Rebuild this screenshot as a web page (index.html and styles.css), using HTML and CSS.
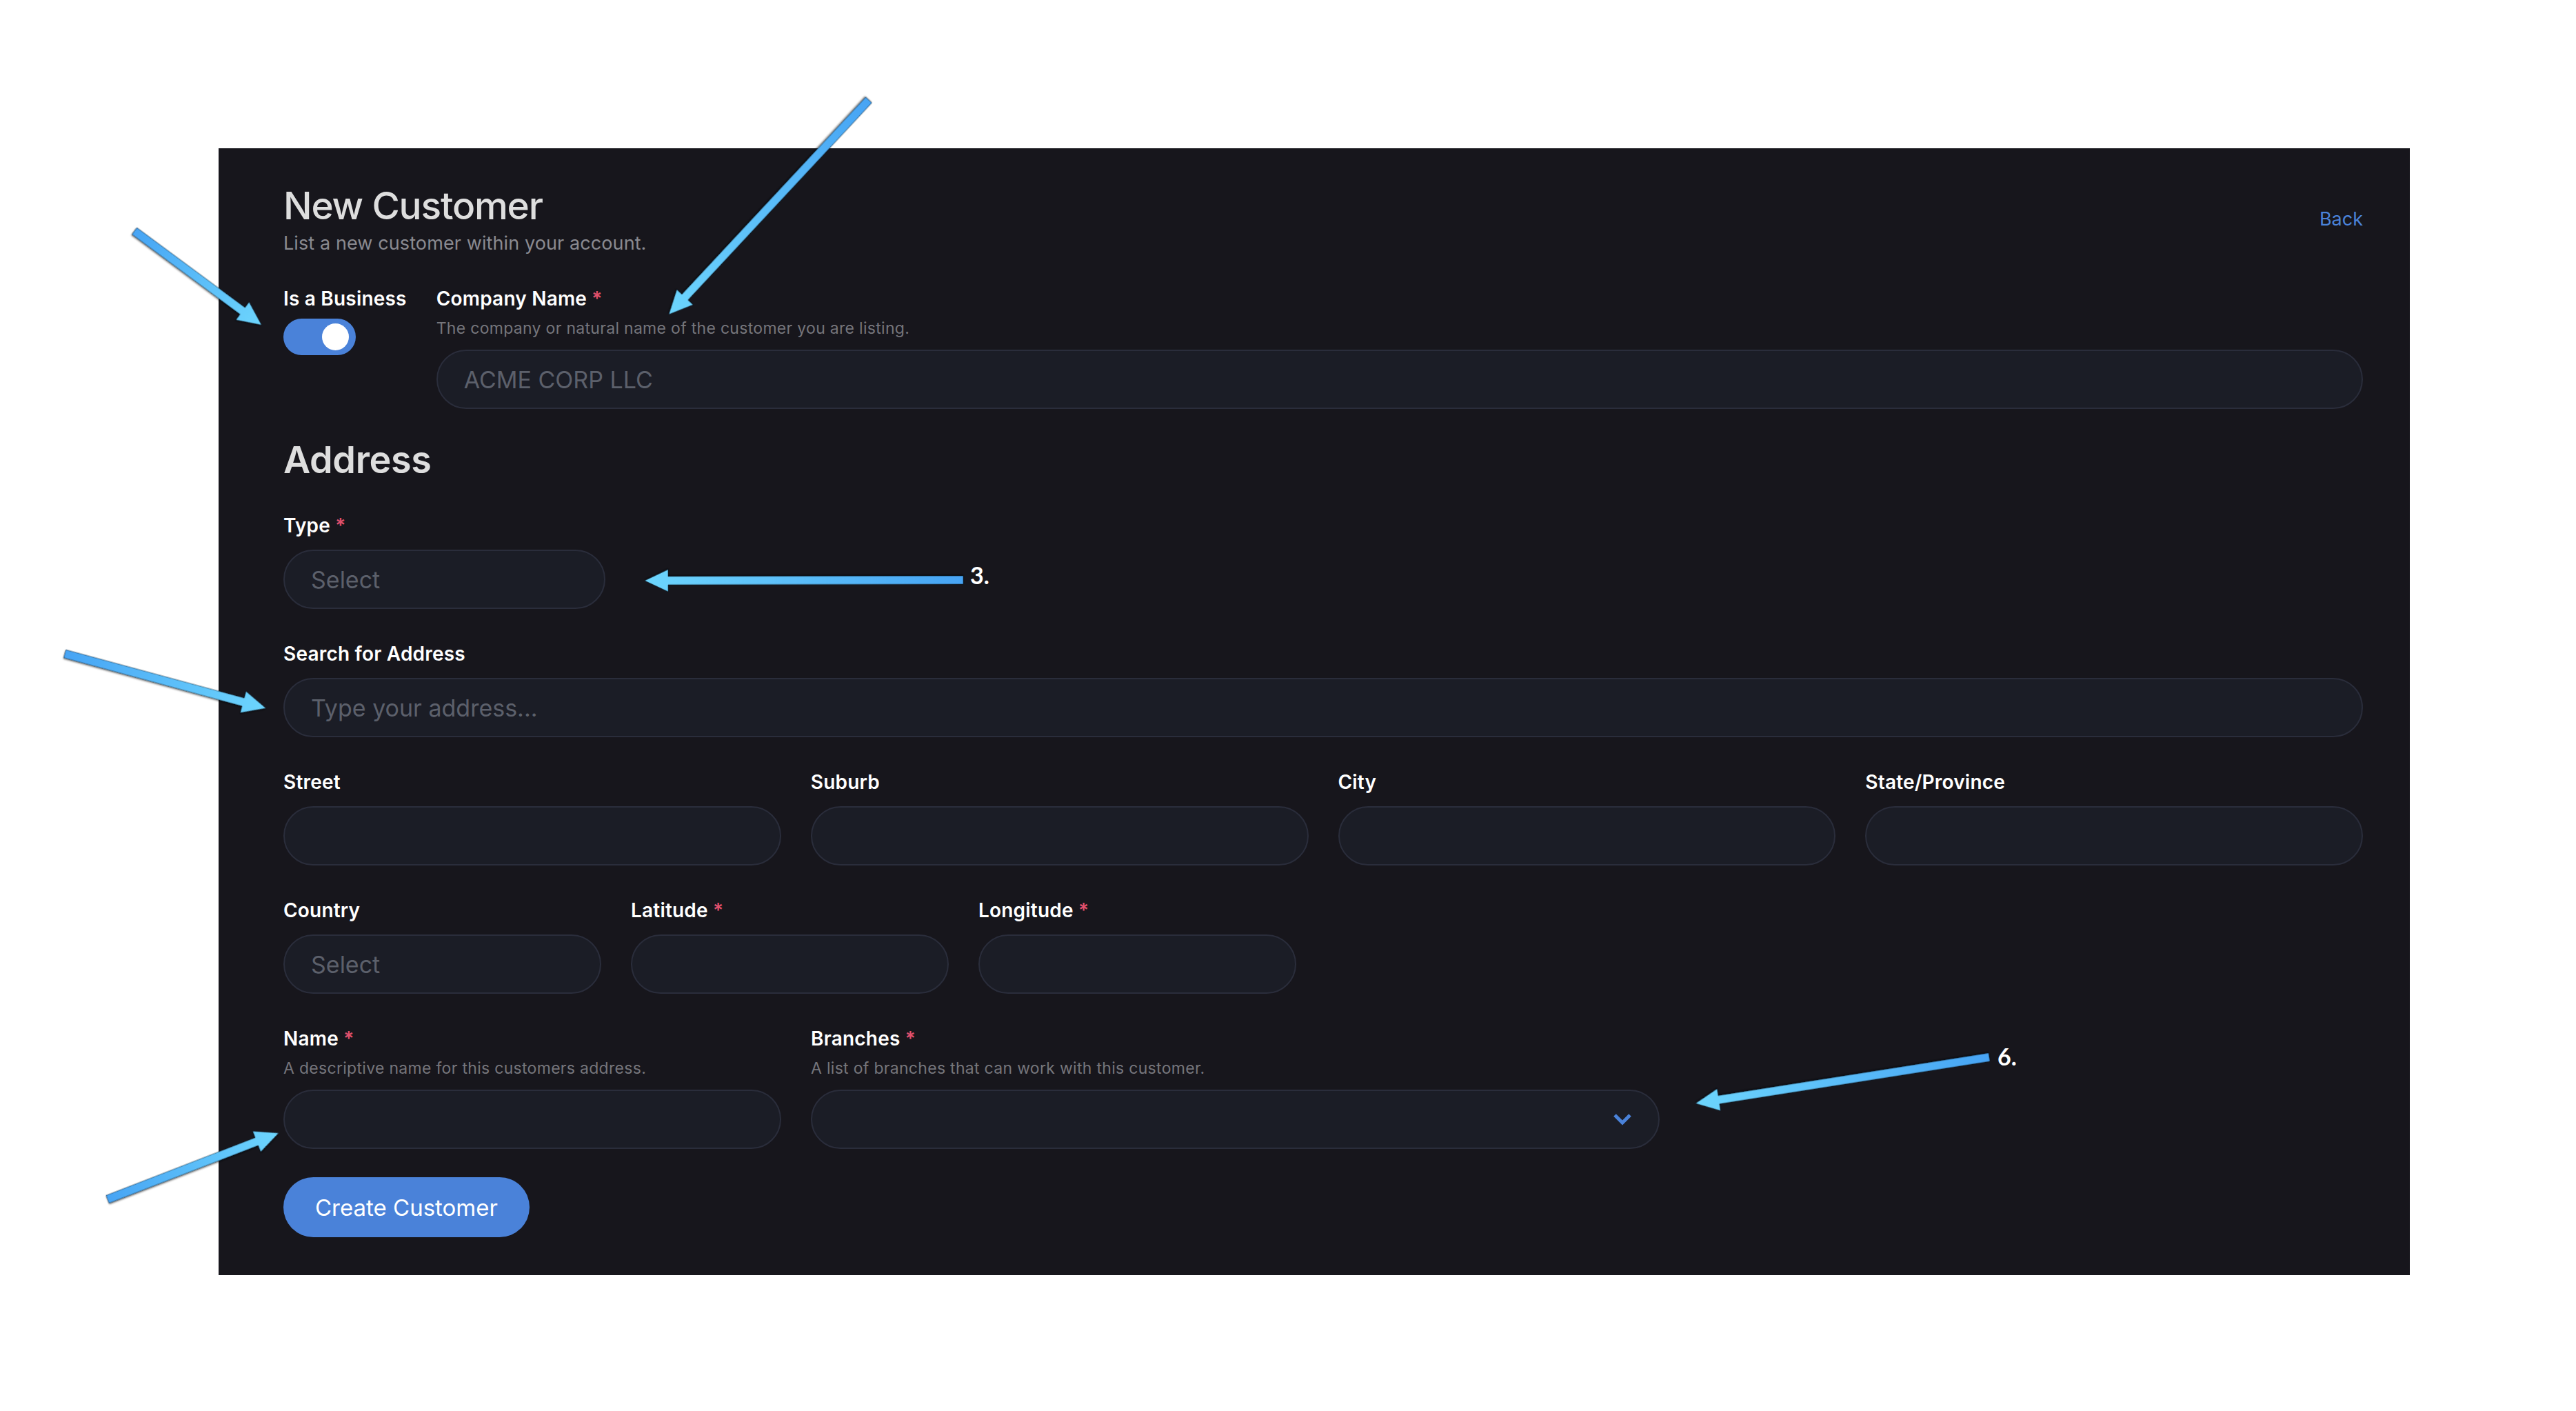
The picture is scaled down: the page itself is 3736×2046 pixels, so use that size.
FILE: index.html
```html
<!DOCTYPE html>
<html lang="en">
<head>
<meta charset="utf-8">
<title>New Customer</title>
<link rel="stylesheet" href="styles.css">
</head>
<body>
<main class="panel">
  <header class="header">
    <div class="header-text">
      <h1 class="title">New Customer</h1>
      <p class="subtitle">List a new customer within your account.</p>
    </div>
    <a class="back" href="#">Back</a>
  </header>

  <section class="top-row">
    <div class="field field-toggle">
      <label class="label">Is a Business</label>
      <div class="toggle"><span class="knob"></span></div>
    </div>
    <div class="field field-grow">
      <label class="label">Company Name <span class="req">*</span></label>
      <p class="help">The company or natural name of the customer you are listing.</p>
      <input class="input input-after-help" type="text" placeholder="ACME CORP LLC">
    </div>
  </section>

  <h2 class="section-title">Address</h2>

  <section class="fields">
    <div class="field field-type">
      <label class="label">Type <span class="req">*</span></label>
      <div class="input control"><span class="placeholder">Select</span></div>
    </div>

    <div class="field">
      <label class="label">Search for Address</label>
      <input class="input" type="text" placeholder="Type your address...">
    </div>

    <div class="grid grid-four">
      <div class="field">
        <label class="label">Street</label>
        <input class="input" type="text">
      </div>
      <div class="field">
        <label class="label">Suburb</label>
        <input class="input" type="text">
      </div>
      <div class="field">
        <label class="label">City</label>
        <input class="input" type="text">
      </div>
      <div class="field">
        <label class="label">State/Province</label>
        <input class="input" type="text">
      </div>
    </div>

    <div class="grid grid-three">
      <div class="field">
        <label class="label">Country</label>
        <div class="input control"><span class="placeholder">Select</span></div>
      </div>
      <div class="field">
        <label class="label">Latitude <span class="req">*</span></label>
        <input class="input" type="text">
      </div>
      <div class="field">
        <label class="label">Longitude <span class="req">*</span></label>
        <input class="input" type="text">
      </div>
    </div>

    <div class="grid grid-name">
      <div class="field">
        <label class="label">Name <span class="req">*</span></label>
        <p class="help">A descriptive name for this customers address.</p>
        <input class="input input-after-help" type="text">
      </div>
      <div class="field">
        <label class="label">Branches <span class="req">*</span></label>
        <p class="help">A list of branches that can work with this customer.</p>
        <div class="input control control-select input-after-help">
          <svg class="chevron" width="28" height="19" viewBox="0 0 28 19"><polyline points="3,3 14,14 25,3" fill="none" stroke="#4a82d9" stroke-width="5"/></svg>
        </div>
      </div>
    </div>

    <div class="actions">
      <button class="btn" type="button">Create Customer</button>
    </div>
  </section>
</main>

<svg class="annotations" width="3736" height="2046" viewBox="0 0 3736 2046">
  <defs>
    <linearGradient id="arrowGrad" x1="0" y1="0" x2="1" y2="0">
      <stop offset="0" stop-color="#47a4f4"/>
      <stop offset="1" stop-color="#6dd5fd"/>
    </linearGradient>
    <filter id="arrowShadow" x="-10%" y="-50%" width="120%" height="200%">
      <feDropShadow dx="0" dy="1.5" stdDeviation="1.2" flood-color="#000" flood-opacity="0.55"/>
    </filter>
  </defs>
  <g class="arrow" transform="translate(195 335) rotate(36.47)"><path d="M0 -6 H195 V-16 L229 0 L195 16 V6 H0 Z"/></g>
  <g class="arrow" transform="translate(1260 145) rotate(133)"><path d="M0 -6 H391 V-16 L425 0 L391 16 V6 H0 Z"/></g>
  <g class="arrow" transform="translate(1397 841) rotate(179.88)"><path d="M0 -6 H428 V-16 L462 0 L428 16 V6 H0 Z"/></g>
  <g class="arrow" transform="translate(94 948) rotate(15.14)"><path d="M0 -6 H268 V-16 L302 0 L268 16 V6 H0 Z"/></g>
  <g class="arrow" transform="translate(156 1739) rotate(-21.16)"><path d="M0 -6 H232 V-16 L266 0 L232 16 V6 H0 Z"/></g>
  <g class="arrow" transform="translate(2885 1533) rotate(171.06)"><path d="M0 -6 H397 V-16 L431 0 L397 16 V6 H0 Z"/></g>
  <text class="callout" x="1407" y="847">3.</text>
  <text class="callout" x="2897" y="1545">6.</text>
</svg>
</body>
</html>
```

FILE: styles.css
```css
* {
  box-sizing: border-box;
}

html, body {
  margin: 0;
  padding: 0;
}

body {
  position: relative;
  width: 3736px;
  height: 2046px;
  background: #ffffff;
  font-family: Inter, "Noto Sans", "Liberation Sans", sans-serif;
  overflow: hidden;
}

.panel {
  margin: 215px 0 0 317px;
  width: 3178px;
  padding: 50px 68px 55px 94px;
  background: #17161c;
  display: flex;
  flex-direction: column;
}

/* Header */
.header {
  display: flex;
  justify-content: space-between;
  align-items: center;
}

.title {
  margin: 0;
  font-size: 55px;
  line-height: 66px;
  font-weight: 500;
  color: #dedede;
  letter-spacing: -1.2px;
}

.subtitle {
  margin: 4px 0 0;
  font-size: 27px;
  line-height: 36px;
  font-weight: 400;
  color: #8a8a90;
  letter-spacing: 0.1px;
}

.back {
  font-size: 27px;
  line-height: 36px;
  color: #4a82d9;
  text-decoration: none;
}

/* Fields */
.top-row {
  margin-top: 44px;
  display: flex;
  gap: 43px;
  align-items: flex-start;
}

.field {
  display: flex;
  flex-direction: column;
  min-width: 0;
}

.field-grow {
  flex: 1;
}

.label {
  display: block;
  font-size: 28px;
  line-height: 36px;
  font-weight: 600;
  color: #ffffff;
  letter-spacing: 0.2px;
  margin-bottom: 17px;
}

.req {
  color: #e0506c;
  font-weight: 600;
}

.help {
  margin: -8px 0 15px;
  font-size: 23px;
  line-height: 32px;
  color: #75757b;
  letter-spacing: 0.3px;
}

.toggle {
  position: relative;
  width: 105px;
  height: 53px;
  border-radius: 27px;
  background: #4a82d9;
  margin-top: -6px;
}

.knob {
  position: absolute;
  top: 7px;
  right: 10px;
  width: 39px;
  height: 39px;
  border-radius: 50%;
  background: #ffffff;
}

.section-title {
  margin: 42px 0 0;
  font-size: 54px;
  line-height: 64px;
  font-weight: 600;
  color: #dedede;
  letter-spacing: -0.4px;
}

.fields {
  margin-top: 45px;
  display: flex;
  flex-direction: column;
  gap: 47px;
}

.field-type {
  width: 467px;
}

.input {
  display: flex;
  align-items: center;
  width: 100%;
  height: 86px;
  margin: 0;
  padding: 0 38px;
  border: 2px solid #2a2d3b;
  border-radius: 43px;
  background: #1b1d26;
  font-family: Inter, "Noto Sans", "Liberation Sans", sans-serif;
  font-size: 34px;
  color: #d0d0d0;
  outline: none;
}

.input::placeholder {
  color: #5c606b;
  opacity: 1;
}

.placeholder {
  color: #5c606b;
}

.control-select {
  justify-content: flex-end;
  padding-right: 38px;
}

.chevron {
  display: block;
}

.grid {
  display: grid;
  column-gap: 43px;
}

.grid-four {
  grid-template-columns: repeat(4, 1fr);
}

.grid-three {
  grid-template-columns: repeat(3, 461px);
}

.grid-name {
  grid-template-columns: 722px 1231px;
}

.actions {
  margin-top: -6px;
  display: flex;
}

.btn {
  height: 87px;
  padding: 0 46px;
  border: none;
  border-radius: 44px;
  background: #4a82d9;
  color: #ffffff;
  font-family: Inter, "Noto Sans", "Liberation Sans", sans-serif;
  font-size: 33px;
  font-weight: 400;
}

/* Annotation overlay */
.annotations {
  position: absolute;
  top: 0;
  left: 0;
  pointer-events: none;
}

.arrow path {
  fill: url(#arrowGrad);
  stroke: rgba(15, 30, 45, 0.55);
  stroke-width: 1;
  filter: url(#arrowShadow);
}

.callout {
  font-family: Lato, "Open Sans", "Liberation Sans", sans-serif;
  font-weight: 700;
  font-size: 34px;
  fill: #ffffff;
}
```
